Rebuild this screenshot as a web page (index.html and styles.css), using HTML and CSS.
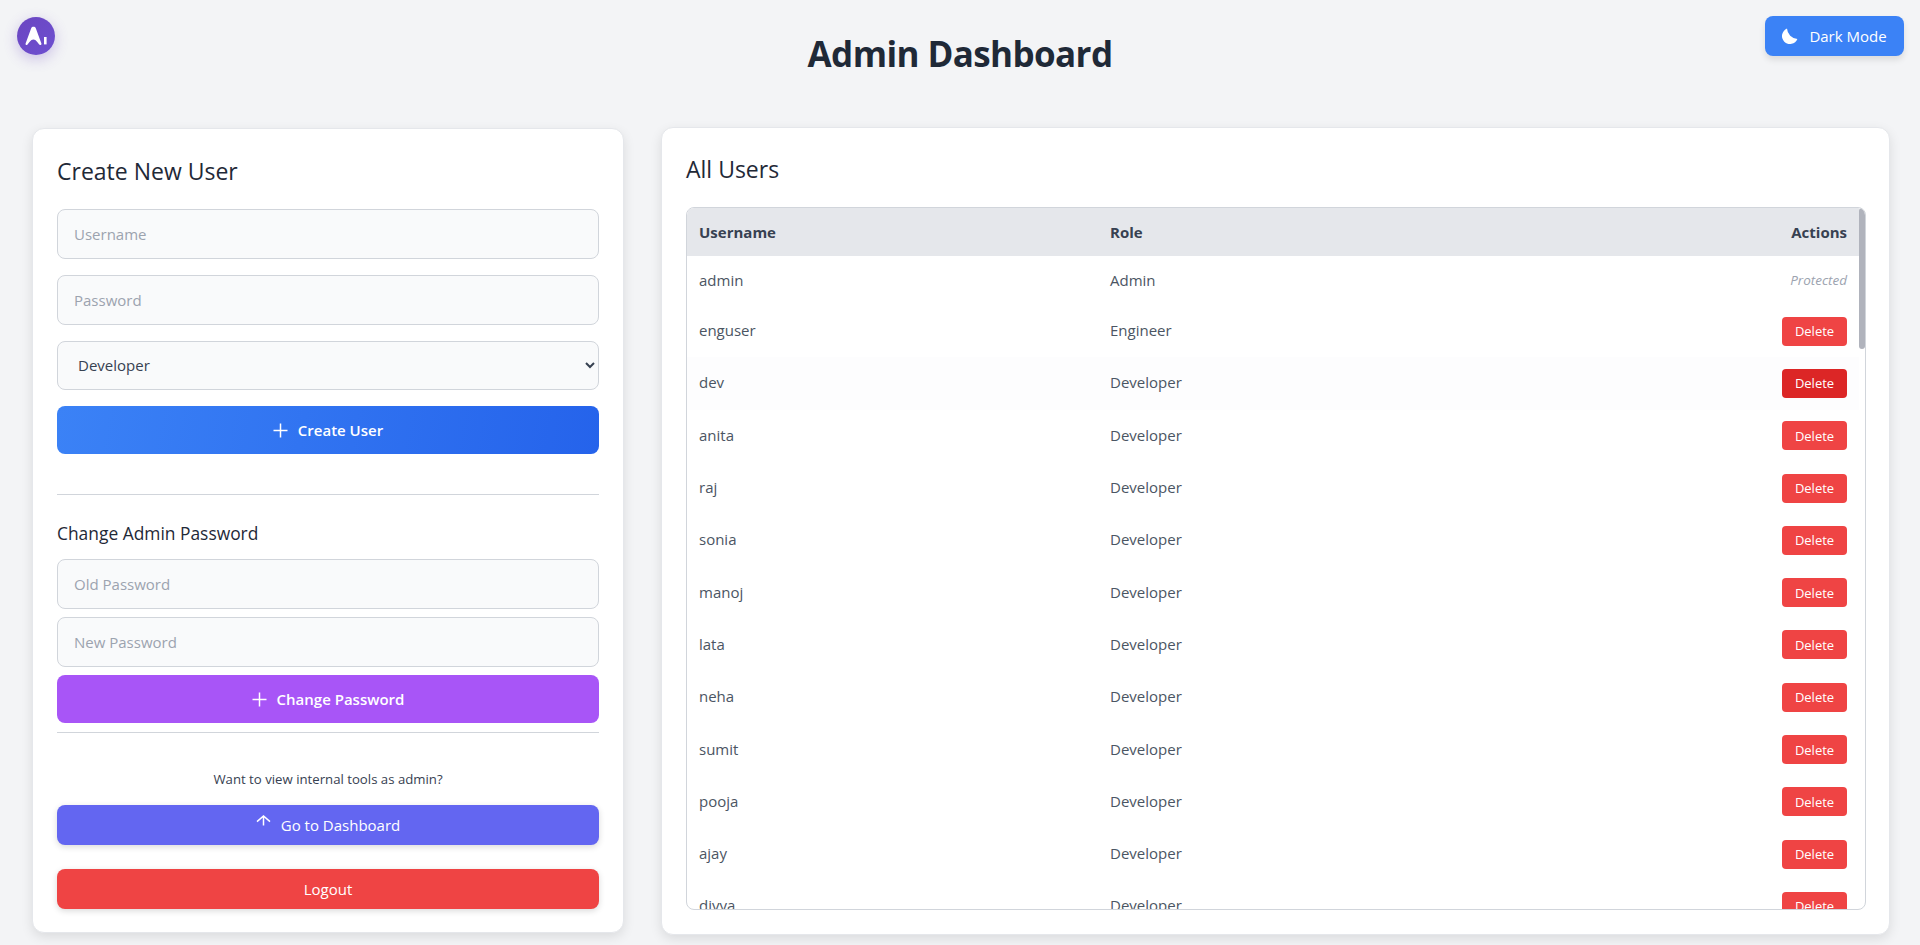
FILE: index.html
```html
<!DOCTYPE html>
<html lang="en">
<head>
    <meta charset="UTF-8">
    <meta name="viewport" content="width=device-width, initial-scale=1.0">
    <title>Admin Dashboard</title>
    <link rel="stylesheet" href="styles.css">
</head>
<body>
    <a class="logo" href="#" aria-label="Home">
        <svg viewBox="0 0 38 38" width="38" height="38">
            <path d="M8.6 26.4 C8.2 27.6 9.6 28.6 10.6 27.6 C12 26 13.6 22.6 16.4 22.6 C19.2 22.6 20.8 26 22.2 27.6 C23.2 28.6 24.8 27.6 24.4 26.4 L18.8 11.2 C18 9.4 15 9.4 14.2 11.2 Z" fill="#fff"/>
            <rect x="27" y="20" width="2.6" height="7.4" fill="#fff"/>
        </svg>
    </a>
    <button class="theme-toggle" type="button">
        <svg viewBox="0 0 16 16" width="16" height="16">
            <path d="M5 0.6 A8 8 0 1 0 15.4 11 A11 11 0 0 1 5 0.6 Z" fill="#fff"/>
        </svg>
        <span>Dark Mode</span>
    </button>

    <h1 class="page-title">Admin Dashboard</h1>

    <main class="layout">
        <section class="card side-card">
            <h2 class="card-title">Create New User</h2>
            <form class="stack">
                <input class="field" type="text" placeholder="Username">
                <input class="field" type="password" placeholder="Password">
                <select class="field field-select">
                    <option>Developer</option>
                    <option>Engineer</option>
                    <option>Admin</option>
                </select>
                <button class="btn btn-create" type="button">
                    <svg class="icon" viewBox="0 0 15 15"><path d="M7.5 0.5V14.5M0.5 7.5H14.5"/></svg>
                    Create User
                </button>
            </form>

            <hr class="divider divider-first">

            <h3 class="sub-title">Change Admin Password</h3>
            <form class="stack stack-tight">
                <input class="field" type="password" placeholder="Old Password">
                <input class="field" type="password" placeholder="New Password">
                <button class="btn btn-password" type="button">
                    <svg class="icon" viewBox="0 0 15 15"><path d="M7.5 0.5V14.5M0.5 7.5H14.5"/></svg>
                    Change Password
                </button>
            </form>

            <hr class="divider divider-second">

            <p class="hint">Want to view internal tools as admin?</p>
            <button class="btn btn-short btn-dashboard" type="button">
                <svg class="icon icon-up" viewBox="0 0 15 11"><path d="M7.5 10.5V1M1 6.6L7.5 1L14 6.6"/></svg>
                Go to Dashboard
            </button>
            <button class="btn btn-short btn-logout" type="button">Logout</button>
        </section>

        <section class="card users-card">
            <h2 class="card-title users-title">All Users</h2>
            <div class="table-wrap">
                <table class="users">
                    <thead>
                        <tr><th class="col-name">Username</th><th class="col-role">Role</th><th class="col-actions">Actions</th></tr>
                    </thead>
                    <tbody>
                        <tr class="row-plain"><td>admin</td><td>Admin</td><td class="col-actions"><em class="protected">Protected</em></td></tr>
                        <tr><td>enguser</td><td>Engineer</td><td class="col-actions"><button class="btn-delete" type="button">Delete</button></td></tr>
                        <tr class="row-hover"><td>dev</td><td>Developer</td><td class="col-actions"><button class="btn-delete" type="button">Delete</button></td></tr>
                        <tr><td>anita</td><td>Developer</td><td class="col-actions"><button class="btn-delete" type="button">Delete</button></td></tr>
                        <tr><td>raj</td><td>Developer</td><td class="col-actions"><button class="btn-delete" type="button">Delete</button></td></tr>
                        <tr><td>sonia</td><td>Developer</td><td class="col-actions"><button class="btn-delete" type="button">Delete</button></td></tr>
                        <tr><td>manoj</td><td>Developer</td><td class="col-actions"><button class="btn-delete" type="button">Delete</button></td></tr>
                        <tr><td>lata</td><td>Developer</td><td class="col-actions"><button class="btn-delete" type="button">Delete</button></td></tr>
                        <tr><td>neha</td><td>Developer</td><td class="col-actions"><button class="btn-delete" type="button">Delete</button></td></tr>
                        <tr><td>sumit</td><td>Developer</td><td class="col-actions"><button class="btn-delete" type="button">Delete</button></td></tr>
                        <tr><td>pooja</td><td>Developer</td><td class="col-actions"><button class="btn-delete" type="button">Delete</button></td></tr>
                        <tr><td>ajay</td><td>Developer</td><td class="col-actions"><button class="btn-delete" type="button">Delete</button></td></tr>
                        <tr><td>divya</td><td>Developer</td><td class="col-actions"><button class="btn-delete" type="button">Delete</button></td></tr>
                    </tbody>
                </table>
                <div class="scroll-thumb"></div>
            </div>
        </section>
    </main>
</body>
</html>
```

FILE: styles.css
```css
/* General Styles */
* {
    box-sizing: border-box;
}

body {
    margin: 0;
    min-height: 100vh;
    background: #f3f4f6;
    color: #1f2937;
    font-family: "Open Sans", "Noto Sans", sans-serif;
    overflow: hidden;
}

/* Overlays */
.logo {
    position: absolute;
    top: 17px;
    left: 17px;
    width: 38px;
    height: 38px;
    border-radius: 50%;
    background: linear-gradient(135deg, #6b46c1, #6d4fd0);
    box-shadow: 0 4px 14px rgba(107, 70, 193, 0.3);
}

.logo svg {
    display: block;
}

.theme-toggle {
    position: absolute;
    top: 16px;
    right: 16px;
    width: 139px;
    height: 40px;
    display: flex;
    align-items: center;
    justify-content: center;
    gap: 11px;
    border: none;
    border-radius: 8px;
    background: #3b82f6;
    color: #fff;
    font-family: inherit;
    font-size: 15px;
    box-shadow: 0 4px 6px rgba(0, 0, 0, 0.1);
}

/* Header */
.page-title {
    margin: 0;
    padding-top: 30px;
    height: 127px;
    text-align: center;
    font-size: 35px;
    line-height: 48px;
    letter-spacing: -0.6px;
    font-weight: 700;
    color: #1f2937;
}

/* Layout */
.layout {
    display: grid;
    grid-template-columns: 592px 1229px;
    column-gap: 37px;
    padding: 0 30px 0 32px;
    align-items: start;
}

.card {
    background: #fff;
    border: 1px solid #e5e7eb;
    border-radius: 12px;
    box-shadow: 0 4px 12px rgba(0, 0, 0, 0.1);
}

.side-card {
    margin-top: 1px;
    height: 805px;
    padding: 24px;
}

.users-card {
    height: 808px;
    padding: 24px 23px 0 24px;
}

.card-title {
    margin: 0 0 20px;
    font-size: 23px;
    line-height: 36px;
    font-weight: 500;
    color: #1f2937;
}

.users-title {
    margin-bottom: 21px;
    line-height: 34px;
}

.sub-title {
    margin: 26px 0 14px;
    font-size: 17.4px;
    line-height: 24px;
    font-weight: 500;
    color: #1f2937;
}

/* Form */
.stack {
    display: flex;
    flex-direction: column;
    gap: 16px;
}

.stack-tight {
    gap: 8px;
}

.field {
    width: 100%;
    height: 50px;
    padding: 0 16px;
    background: #f9fafb;
    border: 1px solid #d1d5db;
    border-radius: 8px;
    font-family: inherit;
    font-size: 15px;
    color: #374151;
    outline: none;
}

.field::placeholder {
    color: #9ca3af;
}

.field-select {
    height: 49px;
    padding-bottom: 2px;
}

.btn {
    width: 100%;
    height: 48px;
    display: flex;
    align-items: center;
    justify-content: center;
    gap: 10px;
    border: none;
    border-radius: 8px;
    color: #fff;
    font-family: inherit;
    font-size: 15px;
    font-weight: 600;
}

.btn-create {
    background: linear-gradient(100deg, #3b82f6, #2563eb);
}

.btn-password {
    background: #a855f7;
}

.btn-short {
    height: 40px;
    font-weight: 500;
    box-shadow: 0 2px 6px rgba(0, 0, 0, 0.15);
}

.btn-dashboard {
    background: #6366f1;
    margin-bottom: 24px;
}

.btn-logout {
    background: #ef4444;
}

.icon {
    width: 15px;
    height: 15px;
    fill: none;
    stroke: #fff;
    stroke-width: 1.5;
}

.icon-up {
    height: 11px;
    margin-top: -10px;
}

.divider {
    margin: 0;
    border: none;
    border-top: 1px solid #d1d5db;
}

.divider-first {
    margin-top: 40px;
}

.divider-second {
    margin-top: 9px;
}

.hint {
    margin: 36px 0 16px;
    text-align: center;
    font-size: 13.2px;
    line-height: 20px;
    color: #374151;
}

/* Users table */
.table-wrap {
    position: relative;
    height: 703px;
    padding-right: 6px;
    overflow: hidden;
    border: 1px solid #d1d5db;
    border-radius: 8px;
}

.scroll-thumb {
    position: absolute;
    top: 0;
    right: 0;
    width: 6px;
    height: 141px;
    background: #b0b3bc;
    border-radius: 3px;
}

.users {
    width: 100%;
    table-layout: fixed;
    border-collapse: collapse;
    font-size: 15px;
    color: #4b5563;
}

.users th {
    height: 48px;
    padding: 0 12px;
    background: #e5e7eb;
    color: #374151;
    font-size: 15px;
    font-weight: 700;
    text-align: left;
}

.users .col-name {
    width: 411px;
}

.users .col-role {
    width: 400px;
}

.users td {
    height: 52.3px;
    padding: 0 12px 2px;
}

.users .row-plain td {
    height: 49px;
}

.users .col-actions {
    text-align: right;
}

.users td.col-actions {
    padding-bottom: 0;
}

.row-hover td {
    background: #fdfdfe;
}

.row-hover .btn-delete {
    background: #dc2626;
}

.protected {
    display: block;
    margin-bottom: 2px;
    font-size: 13.5px;
    color: #9ca3af;
}

.btn-delete {
    display: block;
    margin-left: auto;
    width: 65px;
    height: 29px;
    padding: 0;
    border: none;
    border-radius: 4px;
    background: #ef4444;
    color: #fff;
    font-family: inherit;
    font-size: 13px;
}
```
